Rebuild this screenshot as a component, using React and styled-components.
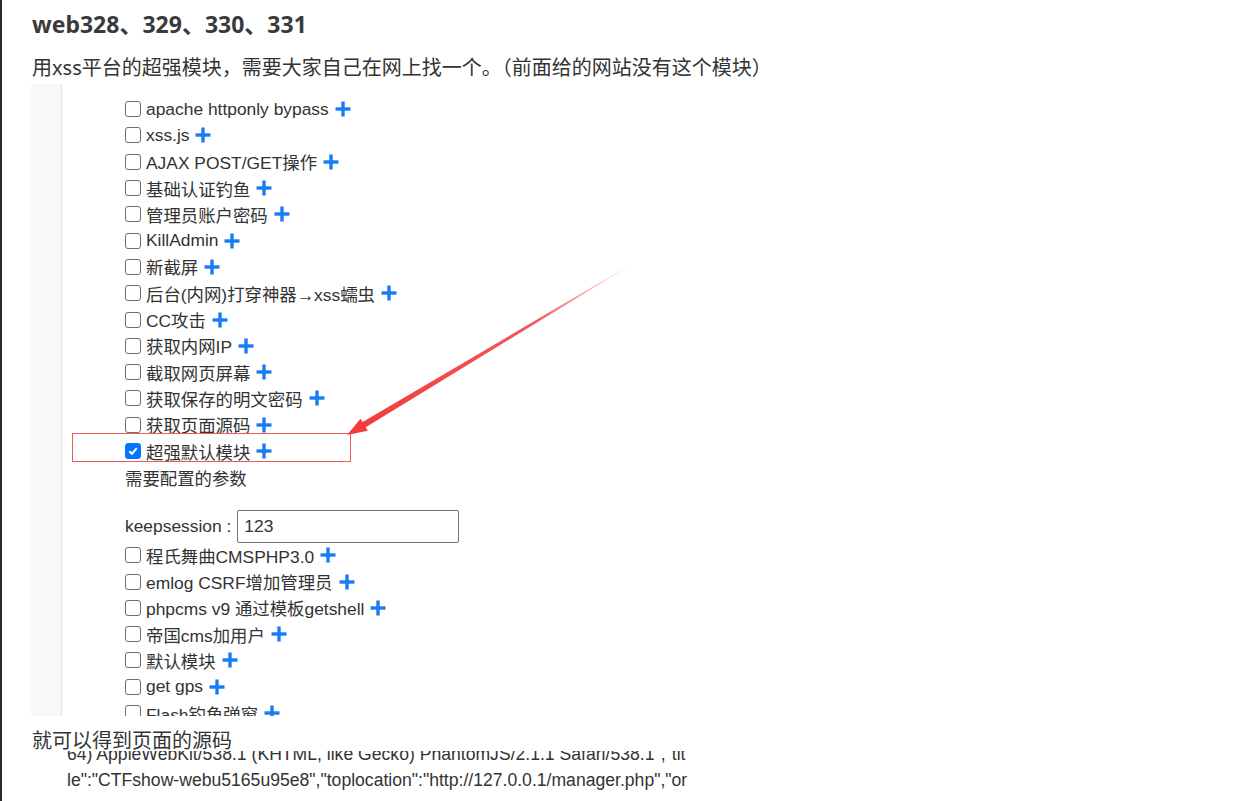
import React from "react";
import styled, { createGlobalStyle } from "styled-components";

const GlobalStyle = createGlobalStyle`
  html, body { margin: 0; padding: 0; background: #fff; }
  body { font-family: "Noto Sans", "Noto Sans CJK SC", sans-serif; color: #333; }
`;

const Page = styled.div`
  min-height: 801px;
  border-left: 2px solid #2b2b2b;
  padding-left: 29px;
  box-sizing: border-box;
  overflow: hidden;
`;

const Title = styled.h3`
  margin: 8px 0 0;
  font-size: 23px;
  line-height: 32px;
  font-weight: 700;
  color: #3a3a3a;
  padding-left: 1px;
`;

const Para = styled.p`
  margin: ${(p) => p.$mt || 0}px 0 0;
  padding-left: 1px;
  font-size: 20px;
  line-height: ${(p) => p.$lh || 30}px;
  color: #333;
  white-space: nowrap;
`;

const Shot = styled.div`
  position: relative;
  margin-top: 1px;
  width: 640px;
  height: 632px;
  display: flex;
  overflow: hidden;
  background: #fff;
`;

const Gutter = styled.div`
  width: 30px;
  flex: none;
  background: #f8f8f8;
  border-right: 1px solid #e6e6e6;
`;

const List = styled.div`
  padding: 12px 0 0 63px;
  display: flex;
  flex-direction: column;
  font-family: "Liberation Sans", "Noto Sans CJK SC", sans-serif;
  font-size: 17.4px;
  color: #333;
`;

const Row = styled.div`
  height: ${(p) => p.$h || 26.3}px;
  flex: none;
  display: flex;
  align-items: center;
  white-space: nowrap;
`;

const Box = styled.span`
  width: 14px;
  height: 14px;
  flex: none;
  border: 1px solid ${(p) => (p.$checked ? "#0075ff" : "#6e6e6e")};
  background: ${(p) => (p.$checked ? "#0075ff" : "#fff")};
  border-radius: 3px;
  margin-right: 5px;
  display: flex;
  align-items: center;
  justify-content: center;
`;

const PlusIcon = styled.svg`
  margin-left: 6px;
  flex: none;
`;

const Input = styled.div`
  width: 214px;
  height: 31px;
  margin: -1px 0 -1px 6px;
  border: 1px solid #767676;
  border-radius: 2px;
  display: flex;
  align-items: center;
  padding-left: 6px;
  box-sizing: content-box;
`;

const RedBox = styled.div`
  position: absolute;
  left: 41px;
  top: 349px;
  width: 277px;
  height: 27px;
  border: 1px solid #f15a5a;
`;

const ArrowSvg = styled.svg`
  position: absolute;
  left: 0;
  top: 0;
  pointer-events: none;
`;

const Shot2 = styled.div`
  margin-top: -1px;
  width: 622px;
  height: 50px;
  overflow: hidden;
  padding-left: 36px;
`;

const CodeLines = styled.div`
  margin-top: -10px;
  font-family: "Liberation Sans", sans-serif;
  font-size: 17.6px;
  line-height: 26px;
  color: #333;
  white-space: nowrap;
`;

const Plus = () => (
  <PlusIcon width="16" height="16" viewBox="0 0 16 16">
    <rect x="6.3" y="0.5" width="3.4" height="15" fill="#1a7cf2" />
    <rect x="0.5" y="6.3" width="15" height="3.4" fill="#1a7cf2" />
  </PlusIcon>
);

const Check = ({ checked }) => (
  <Box $checked={checked}>
    {checked && (
      <svg width="12" height="12" viewBox="0 0 12 12">
        <path d="M2.3 6.3 L4.9 8.8 L9.8 3.2" stroke="#fff" strokeWidth="2" fill="none" />
      </svg>
    )}
  </Box>
);

const Item = ({ label, checked }) => (
  <Row>
    <Check checked={checked} />
    <span>{label}</span>
    <Plus />
  </Row>
);

const first = [
  "apache httponly bypass",
  "xss.js",
  "AJAX POST/GET操作",
  "基础认证钓鱼",
  "管理员账户密码",
  "KillAdmin",
  "新截屏",
  "后台(内网)打穿神器→xss蠕虫",
  "CC攻击",
  "获取内网IP",
  "截取网页屏幕",
  "获取保存的明文密码",
  "获取页面源码",
];

const second = [
  "程氏舞曲CMSPHP3.0",
  "emlog CSRF增加管理员",
  "phpcms v9 通过模板getshell",
  "帝国cms加用户",
  "默认模块",
  "get gps",
  "Flash钓鱼弹窗",
];

const Arrow = () => (
  <ArrowSvg width="640" height="632" viewBox="0 0 640 632">
    <defs>
      <linearGradient id="ag" gradientUnits="userSpaceOnUse" x1="601" y1="180" x2="330" y2="343">
        <stop offset="0" stopColor="#f23c3c" stopOpacity="0" />
        <stop offset="0.35" stopColor="#f23c3c" stopOpacity="0.85" />
        <stop offset="1" stopColor="#f23c3c" stopOpacity="1" />
      </linearGradient>
    </defs>
    <polygon
      points="600.85,179.74 331.6,338.1 329.56,334.69 316,351 336.77,346.71 334.7,343.3 601.15,180.26"
      fill="url(#ag)"
    />
  </ArrowSvg>
);

export default function App() {
  return (
    <>
      <GlobalStyle />
      <Page>
        <Title>web328、329、330、331</Title>
        <Para $mt={13}>用xss平台的超强模块，需要大家自己在网上找一个。（前面给的网站没有这个模块）</Para>
        <Shot>
          <Gutter />
          <List>
            {first.map((t) => (
              <Item key={t} label={t} />
            ))}
            <Item label="超强默认模块" checked />
            <Row>需要配置的参数</Row>
            <Row $h={20.65} />
            <Row $h={31}>
              <span>keepsession :</span>
              <Input>123</Input>
            </Row>
            {second.map((t) => (
              <Item key={t} label={t} />
            ))}
          </List>
          <RedBox />
          <Arrow />
        </Shot>
        <Para $mt={14} $lh={22}>就可以得到页面的源码</Para>
        <Shot2>
          <CodeLines>
            <div>64) AppleWebKit/538.1 (KHTML, like Gecko) PhantomJS/2.1.1 Safari/538.1","tit</div>
            <div>le":"CTFshow-webu5165u95e8","toplocation":"http://127.0.0.1/manager.php","or</div>
          </CodeLines>
        </Shot2>
      </Page>
    </>
  );
}
